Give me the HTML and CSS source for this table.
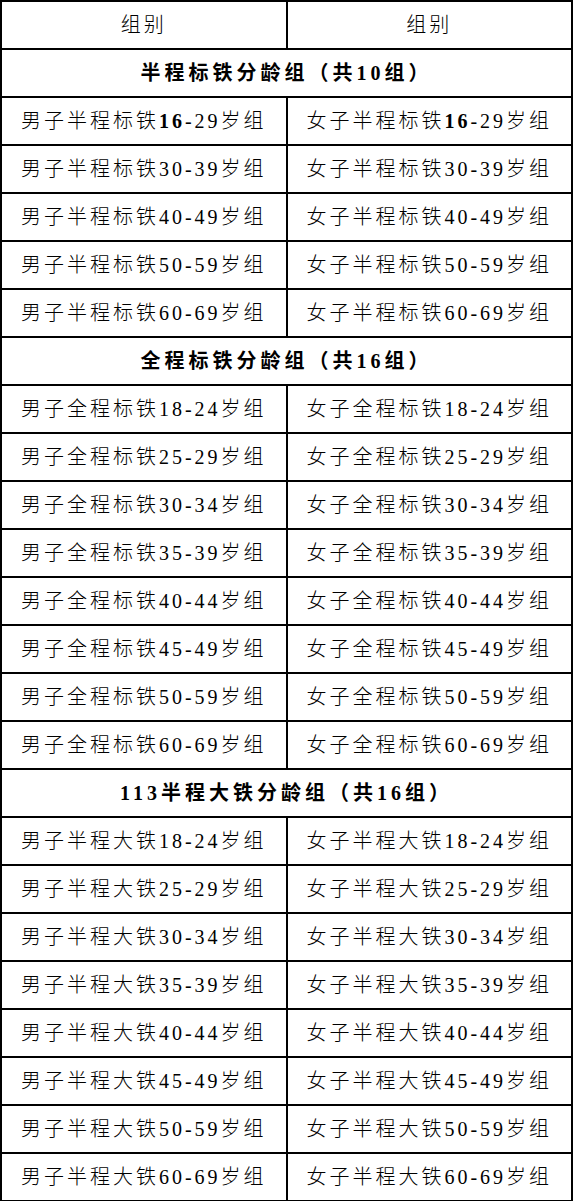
FILE: index.html
```html
<!DOCTYPE html>
<html lang="zh">
<head>
<meta charset="utf-8">
<link rel="stylesheet" href="styles.css">
</head>
<body>
<table class="groups">
<colgroup><col class="col"><col class="col"></colgroup>
<tr><td>组别</td><td>组别</td></tr>
<tr class="sec"><td colspan="2">半程标铁分龄组（共10组）</td></tr>
<tr><td>男子半程标铁<b>16</b>-29岁组</td><td>女子半程标铁<b>16</b>-29岁组</td></tr>
<tr><td>男子半程标铁30-39岁组</td><td>女子半程标铁30-39岁组</td></tr>
<tr><td>男子半程标铁40-49岁组</td><td>女子半程标铁40-49岁组</td></tr>
<tr><td>男子半程标铁50-59岁组</td><td>女子半程标铁50-59岁组</td></tr>
<tr><td>男子半程标铁60-69岁组</td><td>女子半程标铁60-69岁组</td></tr>
<tr class="sec"><td colspan="2">全程标铁分龄组（共16组）</td></tr>
<tr><td>男子全程标铁18-24岁组</td><td>女子全程标铁18-24岁组</td></tr>
<tr><td>男子全程标铁25-29岁组</td><td>女子全程标铁25-29岁组</td></tr>
<tr><td>男子全程标铁30-34岁组</td><td>女子全程标铁30-34岁组</td></tr>
<tr><td>男子全程标铁35-39岁组</td><td>女子全程标铁35-39岁组</td></tr>
<tr><td>男子全程标铁40-44岁组</td><td>女子全程标铁40-44岁组</td></tr>
<tr><td>男子全程标铁45-49岁组</td><td>女子全程标铁45-49岁组</td></tr>
<tr><td>男子全程标铁50-59岁组</td><td>女子全程标铁50-59岁组</td></tr>
<tr><td>男子全程标铁60-69岁组</td><td>女子全程标铁60-69岁组</td></tr>
<tr class="sec"><td colspan="2">113半程大铁分龄组（共16组）</td></tr>
<tr><td>男子半程大铁18-24岁组</td><td>女子半程大铁18-24岁组</td></tr>
<tr><td>男子半程大铁25-29岁组</td><td>女子半程大铁25-29岁组</td></tr>
<tr><td>男子半程大铁30-34岁组</td><td>女子半程大铁30-34岁组</td></tr>
<tr><td>男子半程大铁35-39岁组</td><td>女子半程大铁35-39岁组</td></tr>
<tr><td>男子半程大铁40-44岁组</td><td>女子半程大铁40-44岁组</td></tr>
<tr><td>男子半程大铁45-49岁组</td><td>女子半程大铁45-49岁组</td></tr>
<tr><td>男子半程大铁50-59岁组</td><td>女子半程大铁50-59岁组</td></tr>
<tr><td>男子半程大铁60-69岁组</td><td>女子半程大铁60-69岁组</td></tr>
</table>
</body>
</html>
```

FILE: styles.css
```css
html, body {
  margin: 0;
  padding: 0;
  background: #fff;
}
.groups {
  width: 573px;
  border-collapse: collapse;
  table-layout: fixed;
  font-family: "Liberation Serif", "Noto Sans CJK SC", serif;
  font-size: 20px;
  font-weight: 300;
  color: #000;
}
.col {
  width: 50%;
}
.groups td {
  border: 2px solid #000;
  height: 46px;
  padding: 0;
  text-align: center;
  vertical-align: middle;
  letter-spacing: 3px;
  white-space: nowrap;
  line-height: 1;
}
.groups .sec td {
  font-weight: bold;
  letter-spacing: 4px;
}
.groups b {
  font-weight: bold;
}
```
